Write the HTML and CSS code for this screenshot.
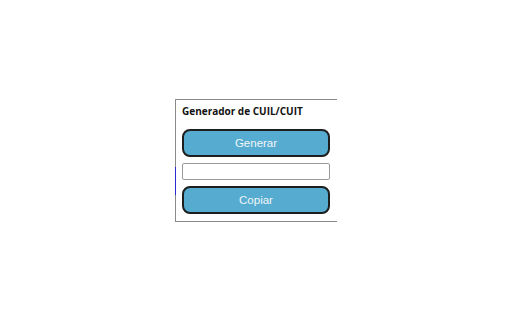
FILE: index.html
```html
<!DOCTYPE html>
<html lang="es">
<head>
<meta charset="utf-8">
<title>Generador de CUIL/CUIT</title>
<link rel="stylesheet" href="styles.css">
</head>
<body>
<div class="popup">
  <div class="title">Generador de CUIL/CUIT</div>
  <button class="btn btn-gen" type="button">Generar</button>
  <input class="field" type="text">
  <button class="btn btn-copy" type="button">Copiar</button>
  <span class="focus-mark"></span>
</div>
</body>
</html>
```

FILE: styles.css
```css
html, body {
  margin: 0;
  padding: 0;
  background: #ffffff;
}
body {
  width: 512px;
  height: 320px;
  display: flex;
  align-items: center;
  justify-content: center;
}
.popup {
  position: relative;
  box-sizing: border-box;
  width: 162px;
  border-top: 1px solid #8a8a8a;
  border-left: 1px solid #8a8a8a;
  border-bottom: 1px solid #8a8a8a;
  padding: 4px 7px 7px 6px;
  display: flex;
  flex-direction: column;
  align-items: flex-start;
}
.title {
  font-family: "Open Sans", "Noto Sans", sans-serif;
  font-weight: 700;
  font-size: 10px;
  line-height: 15px;
  color: #111;
  margin-bottom: 10px;
}
.btn {
  box-sizing: border-box;
  width: 148px;
  height: 28px;
  margin: 0;
  padding: 0;
  background: #55abd0;
  border: 2px solid #1e1e1e;
  border-radius: 8px;
  color: #f2f6f8;
  font-family: "Liberation Sans", Arial, sans-serif;
  font-size: 11.5px;
}
.field {
  box-sizing: border-box;
  width: 148px;
  height: 17px;
  margin: 6px 0 6px 0;
  padding: 0 2px;
  border: 1px solid #9a9a9a;
  border-radius: 2px;
  background: #fff;
}
.focus-mark {
  position: absolute;
  left: -1px;
  top: 67px;
  width: 1px;
  height: 28px;
  background: #2a2ad0;
}
```
